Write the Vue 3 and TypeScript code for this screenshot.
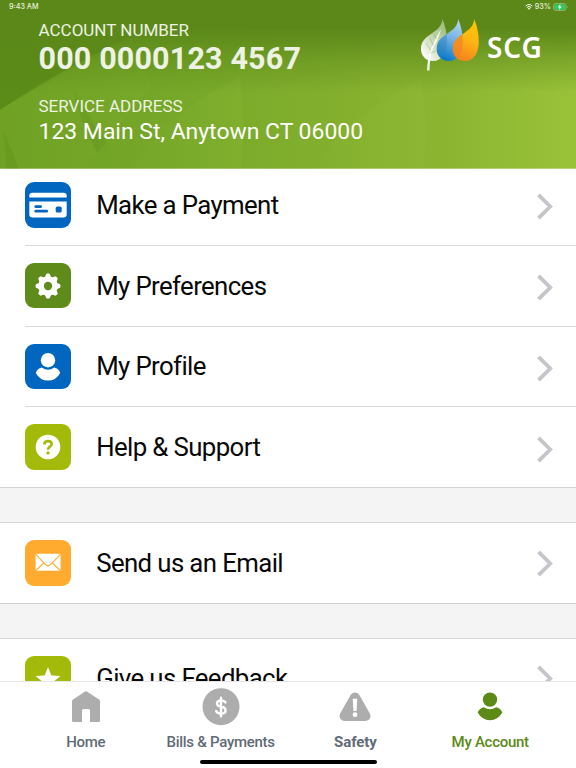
<script setup lang="ts">
import { ref } from 'vue'

type IconName = 'card' | 'gear' | 'person' | 'help' | 'mail' | 'star'
interface Item { label: string; icon: IconName; tone: string }

const groups: Item[][] = [
  [
    { label: 'Make a Payment', icon: 'card', tone: 'blue' },
    { label: 'My Preferences', icon: 'gear', tone: 'green' },
    { label: 'My Profile', icon: 'person', tone: 'blue' },
    { label: 'Help & Support', icon: 'help', tone: 'lime' },
  ],
  [{ label: 'Send us an Email', icon: 'mail', tone: 'orange' }],
  [{ label: 'Give us Feedback', icon: 'star', tone: 'lime' }],
]

const tabs = ['Home', 'Bills & Payments', 'Safety', 'My Account']
const active = ref('My Account')
</script>

<template>
  <div class="screen">
    <header class="header">
      <svg class="backdrop" viewBox="0 0 576 169" preserveAspectRatio="none" aria-hidden="true">
        <defs>
          <linearGradient id="base" x1="0" y1="0" x2="1" y2="0">
            <stop offset="0" stop-color="#6c9f22" />
            <stop offset=".4" stop-color="#7aaa2a" />
            <stop offset=".75" stop-color="#8ab431" />
            <stop offset="1" stop-color="#9ac239" />
          </linearGradient>
          <linearGradient id="shade" x1="0" y1="0" x2="0" y2="1">
            <stop offset="0" stop-color="#5b8819" />
            <stop offset=".17" stop-color="#5b8819" />
            <stop offset=".34" stop-color="#5b8819" stop-opacity=".5" />
            <stop offset=".55" stop-color="#5b8819" stop-opacity="0" />
          </linearGradient>
          <linearGradient id="edge" x1="0" y1="0" x2="1" y2="0">
            <stop offset="0" stop-color="#a5cb45" stop-opacity=".03" />
            <stop offset="1" stop-color="#a5cb45" stop-opacity=".12" />
          </linearGradient>
        </defs>
        <rect width="576" height="169" fill="url(#base)" />
        <path d="M86 169L97 153L75 88L107 143Q130 112 152 86L140 55Q110 45 80 65L0 110V169Z" fill="#91bd36" opacity=".1" />
        <path d="M130 169Q165 115 240 77Q246 120 241 169Z" fill="url(#edge)" />
        <path d="M315 169Q340 125 390 97Q410 83 421 79Q428 120 424 169Z" fill="url(#edge)" />
        <path d="M228 30Q249 96 241 169H315Q345 120 421 79Q418 50 411 30Z" fill="#91bd36" opacity=".06" />
        <path d="M0 110Q80 58 155 26V0H0Z" fill="#558416" opacity=".75" />
        <path d="M73 87Q80 108 107 143L97 153Q78 121 73 87ZM3 131Q13 151 19 169H6Q6 150 3 131Z" fill="#568819" opacity=".2" />
        <rect width="576" height="169" fill="url(#shade)" />
      </svg>

      <div class="status">
        <span class="time">9:43 AM</span>
        <span class="power">
          <svg class="wifi" viewBox="0 0 16 12" aria-hidden="true">
            <path d="M1.2 4.2a10 10 0 0 1 13.6 0M3.7 7a6.3 6.3 0 0 1 8.6 0" fill="none" stroke="#fff" stroke-width="2" />
            <path d="M5.3 9a4 4 0 0 1 5.4 0L8 11.7z" fill="#fff" />
          </svg>
          <span class="percent">93%</span>
          <svg class="battery" viewBox="0 0 15 8" aria-hidden="true">
            <rect x=".5" y=".5" width="12.4" height="7" rx="2" fill="none" stroke="#b6cba0" stroke-width=".6" />
            <rect x="1.3" y="1.2" width="10.8" height="5.6" rx="1.2" fill="#2ecb61" />
            <path d="M7.4.9L4.8 4.4h1.7L6 7.2l2.7-3.6H7z" fill="#fff" />
            <path d="M13.8 3v2q.8-.3.8-1t-.8-1z" fill="#b6cba0" />
          </svg>
        </span>
      </div>

      <div class="top">
        <div class="account">
          <div class="caption">ACCOUNT NUMBER</div>
          <div class="number">000 0000123 4567</div>
          <div class="caption">SERVICE ADDRESS</div>
          <div class="address">123 Main St, Anytown CT 06000</div>
        </div>
        <div class="brand">
          <svg class="logo" viewBox="0 0 60 54" aria-hidden="true">
            <defs>
              <linearGradient id="leaf" x1=".9" y1="0" x2=".1" y2=".9">
                <stop offset="0" stop-color="#b6cea0" stop-opacity=".7" />
                <stop offset=".45" stop-color="#c8d9b6" stop-opacity=".9" />
                <stop offset="1" stop-color="#fff" />
              </linearGradient>
              <linearGradient id="water" x1=".7" y1="0" x2=".4" y2="1">
                <stop offset="0" stop-color="#b4d6f2" />
                <stop offset=".5" stop-color="#6eaee2" />
                <stop offset="1" stop-color="#0878c8" />
              </linearGradient>
              <linearGradient id="flame" x1=".7" y1="0" x2=".4" y2="1">
                <stop offset="0" stop-color="#ffc400" />
                <stop offset=".45" stop-color="#fdb714" />
                <stop offset="1" stop-color="#f5821f" />
              </linearGradient>
              <path id="drop" d="M22.3 0C21.8 15 1 14 1 30C1 37.5 6.5 42 13 42C22 42 27 34 27 22.5C27 14 25 6 22.3 0Z" />
              <clipPath id="in-leaf"><use href="#drop" /></clipPath>
              <clipPath id="in-water"><use href="#drop" x="15.8" /></clipPath>
            </defs>
            <use href="#drop" fill="url(#leaf)" />
            <path d="M7 51.6Q7.5 38 11 30Q15 20 21 10Q18 22 12.500 30Q9.8 38 9.5 51.6Z" fill="#fff" opacity=".9" />
            <path d="M11 32L6 24M13.500 26.500L9.500 18.500M16.500 20L13.500 14M10.500 34Q16 33 20 29" fill="none" stroke="#8cae66" stroke-width=".5" />
            <use href="#drop" x="15.8" fill="url(#water)" />
            <g clip-path="url(#in-leaf)"><use href="#drop" x="15.8" fill="#2f83b8" opacity=".4" /></g>
            <use href="#drop" x="31.8" fill="url(#flame)" />
            <g clip-path="url(#in-water)"><use href="#drop" x="31.8" fill="#f07f24" opacity=".6" /></g>
          </svg>
          <span class="brand-name">SCG</span>
        </div>
      </div>
    </header>

    <main class="content">
      <section v-for="(group, g) in groups" :key="g" class="group">
        <div v-for="item in group" :key="item.label" class="row">
          <span class="tile" :class="item.tone">
            <svg viewBox="0 0 46 46" aria-hidden="true">
              <template v-if="item.icon === 'card'">
                <path d="M4.3 15.6V14a3.2 3.2 0 0 1 3.2-3.2h31A3.2 3.2 0 0 1 41.7 14v1.6zM4.3 19.6h37.4v12.6a3.2 3.2 0 0 1-3.2 3.2h-31a3.2 3.2 0 0 1-3.2-3.2z" fill="#fff" />
                <path d="M10.7 24.6h5M10.7 29.2h11" stroke="#0066bf" stroke-width="2.7" stroke-linecap="round" />
                <rect x="30.7" y="24.6" width="6" height="6" rx="1.6" fill="#0066bf" />
              </template>
              <template v-else-if="item.icon === 'gear'">
                <g fill="#fff">
                  <circle cx="23" cy="23" r="9.8" />
                  <path v-for="n in 8" :key="n" :transform="`rotate(${n * 45} 23 23)`" d="M19.8 14.5L21 11.5Q21.2 10.6 22.2 10.6H23.8Q24.8 10.6 25 11.5L26.2 14.5Z" />
                </g>
                <circle cx="23" cy="23" r="4.2" fill="#5e8b1a" />
              </template>
              <g v-else-if="item.icon === 'person'" fill="#fff">
                <circle cx="23" cy="16.2" r="7.2" />
                <path d="M16.8 23.6Q23 28 29.2 23.6Q34 25 35.2 28.9Q31 36.500 23 36.500Q15 36.500 10.800 28.900Q12 25 16.800 23.600Z" />
              </g>
              <template v-else-if="item.icon === 'help'">
                <circle cx="23" cy="23" r="12.3" fill="#fff" />
                <path d="M19.3 20.5Q19.3 17.1 23 17.1Q26.7 17.1 26.7 20.1Q26.7 21.7 24.7 22.9Q23 24 23 25.7" fill="none" stroke="#a4ba0a" stroke-width="2.6" />
                <circle cx="23" cy="28.9" r="1.7" fill="#a4ba0a" />
              </template>
              <template v-else-if="item.icon === 'mail'">
                <rect x="10.6" y="13.7" width="25" height="17" rx="1" fill="#fff" />
                <path d="M10.6 14.1L20 24.2Q23.1 27.5 26.2 24.2L35.6 14.1M11 30.5L18.8 22.9M35.2 30.5L27.4 22.9" fill="none" stroke="#ffab30" stroke-width="1.1" />
              </template>
              <path v-else d="M23 11L26.4 19.4L35.5 20L28.5 25.8L30.8 34.7L23 29.8L15.2 34.7L17.5 25.8L10.5 20L19.6 19.4Z" fill="#fff" />
            </svg>
          </span>
          <span class="label">{{ item.label }}</span>
          <svg class="chevron" viewBox="0 0 16 27" aria-hidden="true">
            <path d="M1.5 1.8L13.2 13.5L1.5 25.2" fill="none" stroke="#c6c6ca" stroke-width="3.8" />
          </svg>
        </div>
      </section>
    </main>

    <nav class="tabs">
      <button v-for="tab in tabs" :key="tab" type="button" class="tab" :class="{ active: tab === active, heavy: tab === 'Safety' }" @click="active = tab">
        <svg viewBox="0 0 40 40" aria-hidden="true">
          <path v-if="tab === 'Home'" d="M6 13.5Q6 12.2 7 11.4L18.7 3.7Q20 2.8 21.3 3.7L33 11.4Q34 12.2 34 13.5V32.5Q34 34 32.5 34H24V22.5Q24 21 22.5 21H17.5Q16 21 16 22.5V34H7.5Q6 34 6 32.5Z" fill="#adadad" />
          <template v-else-if="tab === 'Bills & Payments'">
            <circle cx="20" cy="18.7" r="18.5" fill="#adadad" />
            <path d="M24.4 14.4Q23.3 12.5 20 12.5Q16 12.5 16 15.4Q16 17.7 20 18.5Q24.5 19.4 24.5 22.4Q24.5 25.6 20.1 25.6Q16.5 25.6 15.2 23.1M20 9.6V28.3" fill="none" stroke="#fff" stroke-width="2.4" stroke-linecap="round" />
          </template>
          <template v-else-if="tab === 'Safety'">
            <path d="M20 9.5L9.5 28H30.500Z" fill="#adadad" stroke="#adadad" stroke-width="10" stroke-linejoin="round" />
            <path d="M17.7 10.8H22.3L21.5 23H18.5Z" fill="#fff" />
            <circle cx="20" cy="26.7" r="2.4" fill="#fff" />
          </template>
          <g v-else fill="#5c8a17">
            <circle cx="20" cy="11.6" r="7.2" />
            <path d="M13.8 19.2Q20 23.4 26.200 19.200Q31 20.400 32.300 24.600Q28 32.200 20 32.200Q12 32.200 7.700 24.600Q9 20.400 13.800 19.200Z" />
          </g>
        </svg>
        <span>{{ tab }}</span>
      </button>
      <div class="indicator"></div>
    </nav>
  </div>
</template>

<style>
body { margin: 0; overflow: hidden; }
</style>

<style scoped>
.screen { width: 576px; height: 768px; display: flex; flex-direction: column; overflow: hidden; background: #fff; font-family: Roboto, "Liberation Sans", sans-serif; }
.header { position: relative; z-index: 1; flex: 0 0 168.7px; display: flex; flex-direction: column; color: #fff; overflow: hidden; }
.backdrop { position: absolute; inset: 0; width: 100%; height: 100%; }
.status { position: relative; display: flex; justify-content: space-between; align-items: center; height: 14px; padding: 0 8.5px 0 9px; box-sizing: border-box; font: 500 7.2px/14px Inter, Roboto, sans-serif; color: #e9f0df; }
.power { display: flex; align-items: center; gap: 1.5px; }
.wifi { width: 8px; height: 6px; }
.battery { width: 15px; height: 8px; }
.top { position: relative; display: flex; justify-content: space-between; padding: 6px 32px 0 38.5px; }
.account { white-space: nowrap; }
.caption { font-size: 17px; line-height: 20px; color: #edf2e3; }
.number { font-size: 30.5px; line-height: 36px; font-weight: 700; color: #eef2e5; padding-top: 1px; margin-bottom: 19px; letter-spacing: 0.15px; }
.address { font-size: 22.95px; line-height: 31px; }
.brand { display: flex; align-items: flex-start; }
.logo { width: 60px; height: 54px; margin: -1px 0 0 -1px; }
.brand-name { margin: 7px 0 0 7px; font: 600 28px/40px "Noto Sans", sans-serif; letter-spacing: 0.9px; width: 57px; }

.content { flex: 1; min-height: 0; overflow: hidden; background: #f4f4f4; }
.group { background: #fff; border-bottom: 1px solid #d2d2d4; }
.group:first-child { margin-top: -3.7px; }
.group + .group { margin-top: 34px; border-top: 1px solid #d8d8da; }
.row { display: flex; align-items: center; height: 79.8px; padding: 0 23px 0 25px; }
.row + .row { border-top: 1px solid #d8d8da; margin-left: 25px; padding-left: 0; }
.tile { width: 46px; height: 45.6px; border-radius: 9px; overflow: hidden; flex: none; }
.tile svg { display: block; width: 46px; height: 46px; }
.blue { background: #0066bf; }
.green { background: #5e8b1a; }
.lime { background: #a4ba0a; }
.orange { background: #ffab30; }
.label { flex: 1; padding-left: 25.2px; font-size: 25.8px; line-height: 36px; letter-spacing: -0.62px; color: #080808; white-space: nowrap; }
.chevron { width: 16px; height: 27px; margin-top: 4px; }
.group + .group .label { margin-top: -1px; }
.group + .group .chevron { margin-top: 0; }

.tabs { flex: 0 0 87px; box-sizing: border-box; position: relative; display: grid; grid-template-columns: repeat(4, 134.8px); justify-content: center; align-items: start; background: #fff; border-top: 1px solid #e6e6e6; padding-top: 6px; }
.tab { display: flex; flex-direction: column; align-items: center; padding: 0; border: 0; background: none; color: #5f6b76; font: 500 15px/20px Roboto, sans-serif; letter-spacing: -0.28px; white-space: nowrap; }
.tab svg { width: 40px; height: 40px; margin-bottom: 4px; }
.tab.heavy { font-weight: 700; letter-spacing: -0.1px; }
.tab.active { color: #5c8a17; }
.indicator { position: absolute; left: 200px; bottom: 4.5px; width: 177px; height: 3.5px; border-radius: 2px; background: #000; }
</style>
